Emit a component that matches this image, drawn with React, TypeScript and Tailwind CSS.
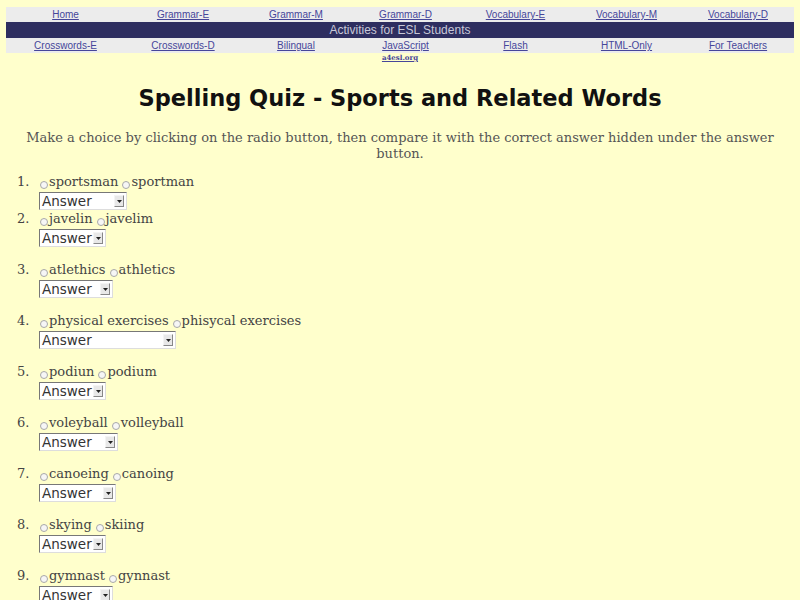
const topLinks = ["Home", "Grammar-E", "Grammar-M", "Grammar-D", "Vocabulary-E", "Vocabulary-M", "Vocabulary-D"];
const bottomLinks = ["Crosswords-E", "Crosswords-D", "Bilingual", "JavaScript", "Flash", "HTML-Only", "For Teachers"];

const questions = [
  { a: "sportsman", b: "sportman", w: 88, tight: true },
  { a: "javelin", b: "javelim", w: 67, tight: false },
  { a: "atlethics", b: "athletics", w: 74, tight: false },
  { a: "physical exercises", b: "phisycal exercises", w: 137, tight: false },
  { a: "podiun", b: "podium", w: 67, tight: false },
  { a: "voleyball", b: "volleyball", w: 79, tight: false },
  { a: "canoeing", b: "canoing", w: 77, tight: false },
  { a: "skying", b: "skiing", w: 67, tight: false },
  { a: "gymnast", b: "gynnast", w: 74, tight: false },
];

function Radio() {
  return (
    <span className="mb-[2px] inline-block h-[8px] w-[8px] shrink-0 rounded-full border border-[#a8a8a8] bg-[#f6f6f6]" />
  );
}

function AnswerBox({ width }: { width: number }) {
  return (
    <div
      className="flex h-[18px] items-stretch border border-t-[#777] border-l-[#777] border-r-[#ddd] border-b-[#ddd] bg-white font-['DejaVu_Sans',sans-serif]"
      style={{ width }}
    >
      <span className="flex-1 pl-[2px] text-[13.5px] leading-[16px] text-[#333]">Answer</span>
      <span className="my-[2px] mr-[2px] flex w-[10px] items-center justify-center border border-t-[#f4f4f4] border-l-[#f4f4f4] border-r-[#888] border-b-[#888] bg-[#e8e8e8]">
        <svg width="5" height="3" viewBox="0 0 5 3">
          <path d="M0 0h5L2.5 3z" fill="#222" />
        </svg>
      </span>
    </div>
  );
}

function NavRow({ links }: { links: string[] }) {
  return (
    <div className="grid h-[15px] grid-cols-[119px_116px_110px_109px_111px_111px_112px] bg-[#ececec]">
      {links.map((l) => (
        <a key={l} href="#" className="text-center text-[10px] leading-[15px] text-[#46469a] underline">
          {l}
        </a>
      ))}
    </div>
  );
}

export default function App() {
  return (
    <div className="min-h-screen bg-[#ffffcc] pt-[7px] font-['DejaVu_Serif',serif]">
      <div className="mx-[6px] font-['Liberation_Sans',Arial,sans-serif]">
        <NavRow links={topLinks} />
        <div className="h-[16px] bg-[#2e2e60] text-center text-[12px] leading-[16px] text-[#c8c8d8]">
          Activities for ESL Students
        </div>
        <NavRow links={bottomLinks} />
        <div className="text-center font-['DejaVu_Serif',serif] text-[7px] font-bold leading-[9px]">
          <a href="#" className="text-[#46469a] underline">a4esl.org</a>
        </div>
      </div>

      <h1 className="mt-[20px] text-center font-['DejaVu_Sans',sans-serif] text-[22.5px] font-bold leading-[32px] text-[#111]">
        Spelling Quiz - Sports and Related Words
      </h1>

      <p className="mx-auto mt-[16px] w-[770px] text-center text-[13px] leading-[16px] text-[#555]">
        Make a choice by clicking on the radio button, then compare it with the correct answer hidden under the answer button.
      </p>

      <div className="mt-[11px] pl-[17px] text-[13px] text-[#444]">
        {questions.map((q, i) => (
          <div key={q.a} className={q.tight || i === questions.length - 1 ? "" : "pb-[14px]"}>
            <div className="flex h-[18px] items-end leading-[18px]">
              <span className="w-[23px]">{i + 1}.</span>
              <span className="flex items-end gap-[1px]">
                <Radio />
                <span>{q.a}</span>
              </span>
              <span className="ml-[4px] flex items-end gap-[1px]">
                <Radio />
                <span>{q.b}</span>
              </span>
            </div>
            <div className="mt-[1px] pl-[22px]">
              <AnswerBox width={q.w} />
            </div>
          </div>
        ))}
      </div>
    </div>
  );
}
